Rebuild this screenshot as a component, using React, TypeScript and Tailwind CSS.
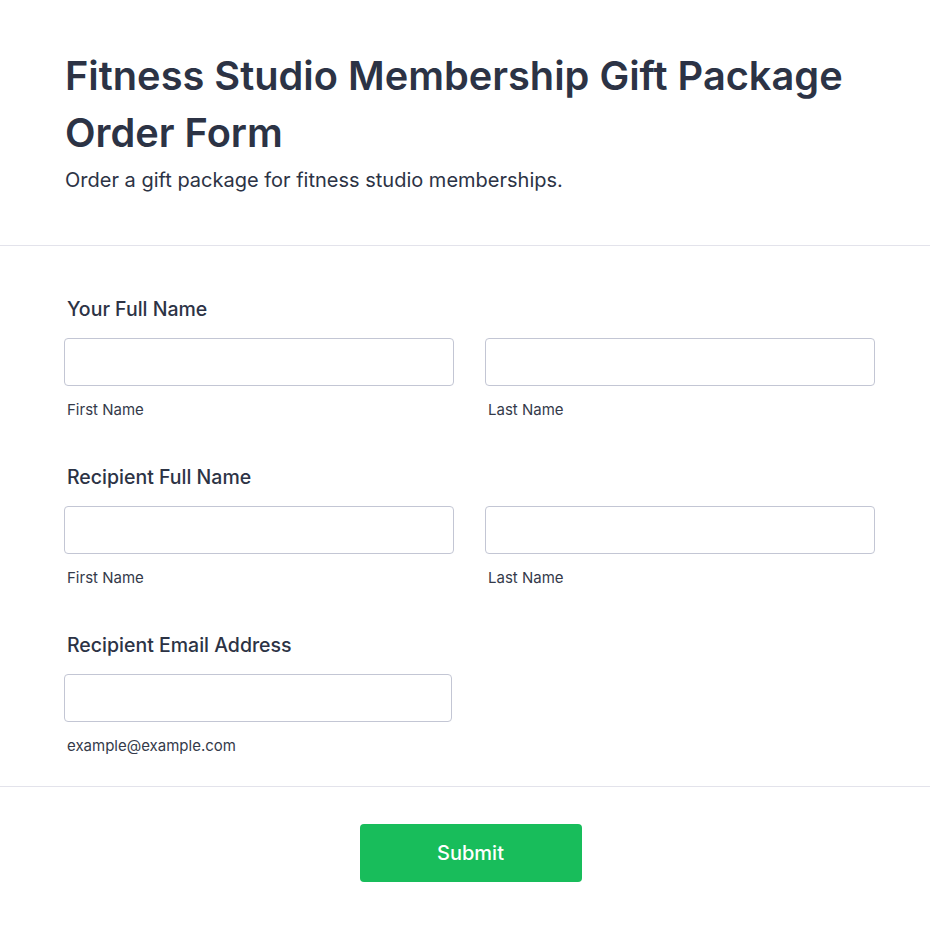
import React from 'react';

const font = { fontFamily: 'Inter, "Noto Sans", sans-serif' };

interface NameFieldProps {
  label: string;
}

const NameField: React.FC<NameFieldProps> = ({ label }) => (
  <div>
    <label className="block pl-[3px] text-[19.5px] leading-7 font-medium text-[#2c3345]">{label}</label>
    <div className="mt-[15px] grid grid-cols-2 gap-[31px]">
      <div>
        <input type="text" className="block h-12 w-full rounded border border-[#c3c6d4] bg-white px-3 outline-none" />
        <div className="mt-[14px] pl-[3px] text-[15px] leading-5 text-[#343a4a]">First Name</div>
      </div>
      <div>
        <input type="text" className="block h-12 w-full rounded border border-[#c3c6d4] bg-white px-3 outline-none" />
        <div className="mt-[14px] pl-[3px] text-[15px] leading-5 text-[#343a4a]">Last Name</div>
      </div>
    </div>
  </div>
);

export default function App() {
  return (
    <div className="min-h-[932px] w-full bg-white" style={font}>
      <div className="rounded-tr-md bg-white">
        {/* Header */}
        <header className="border-b border-[#e3e3eb] pl-[65px] pr-[55px] pt-[47px] pb-[51px]">
          <h1 className="text-[39.75px] leading-[57px] font-semibold text-[#2c3345]">
            Fitness Studio Membership Gift Package Order Form
          </h1>
          <p className="mt-[5px] text-xl leading-7 text-[#2c3345]">
            Order a gift package for fitness studio memberships.
          </p>
        </header>

        {/* Fields */}
        <form className="border-b border-[#e3e3eb] pl-[64px] pr-[55px] pt-[49px] pb-[30px]" onSubmit={(e) => e.preventDefault()}>
          <div className="flex flex-col gap-[43px]">
            <NameField label="Your Full Name" />
            <NameField label="Recipient Full Name" />
            <div>
              <label className="block pl-[3px] text-[19.5px] leading-7 font-medium text-[#2c3345]">Recipient Email Address</label>
              <input type="email" className="mt-[15px] block h-12 w-[388px] rounded border border-[#c3c6d4] bg-white px-3 outline-none" />
              <div className="mt-[14px] pl-[3px] text-[15px] leading-5 text-[#343a4a]">example@example.com</div>
            </div>
          </div>
        </form>

        {/* Submit */}
        <div className="flex justify-center pt-[37px] pb-[50px]">
          <button type="submit" className="ml-[11px] h-[58px] w-[222px] rounded bg-[#18bd5b] text-xl font-medium text-white">
            Submit
          </button>
        </div>
      </div>
    </div>
  );
}
